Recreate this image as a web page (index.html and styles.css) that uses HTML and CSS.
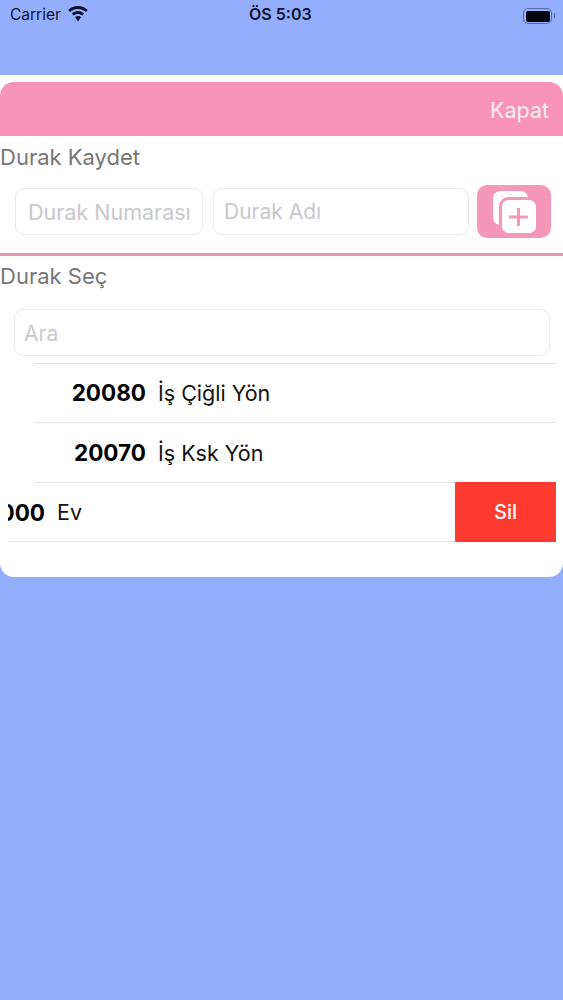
FILE: index.html
```html
<!DOCTYPE html>
<html lang="tr">
<head>
<meta charset="utf-8">
<title>Durak Kaydet</title>
<link rel="stylesheet" href="styles.css">
</head>
<body>
<header class="status">
  <div class="status-left">
    <span class="carrier">Carrier</span>
    <svg class="wifi" viewBox="0 0 20 16" width="20" height="16"><path d="M10 0C6.200 0 2.800 1.500.2 3.900l2 2.200C4.300 4.200 7 3 10 3s5.700 1.200 7.800 3.100l2-2.200C17.200 1.500 13.800 0 10 0z"/><path d="M10 5C7.600 5 5.400 5.900 3.800 7.400l2 2.200C6.900 8.600 8.400 8 10 8s3.100.6 4.200 1.600l2-2.200C14.600 5.900 12.400 5 10 5z"/><path d="M10 10c-1.100 0-2.200.4-3 1.100l3 4.400 3-4.400c-.8-.7-1.900-1.100-3-1.100z"/></svg>
  </div>
  <span class="time">ÖS 5:03</span>
  <div class="battery"><span class="battery-fill"></span></div>
</header>

<main class="panel">
  <div class="sheet">
    <div class="sheet-head"><span class="close">Kapat</span></div>
    <h2 class="title">Durak Kaydet</h2>
    <div class="save-row">
      <input class="field field-num" placeholder="Durak Numarası">
      <input class="field field-name" placeholder="Durak Adı">
      <button class="add" aria-label="Ekle">
        <svg viewBox="0 0 74 53" width="74" height="53">
          <path class="page" d="M24 6h19c5 0 8 3 8 8v18c0 5-3 8-8 8H24c-5 0-8-3-8-8V14c0-5 3-8 8-8z"/>
          <rect class="page page-front" x="23.500" y="13.500" width="37" height="36" rx="8"/>
          <path class="plus" d="M41.500 23v18M32 32h19"/>
        </svg>
      </button>
    </div>
    <div class="rule"></div>
    <h2 class="title title-pick">Durak Seç</h2>
    <div class="search-wrap"><input class="field field-search" placeholder="Ara"></div>
    <div class="list">
      <div class="row row-first"><span class="num">20080</span><span class="name">İş Çiğli Yön</span></div>
      <div class="row row-second"><span class="num">20070</span><span class="name">İş Ksk Yön</span></div>
      <div class="row-swiped">
        <div class="row-main"><span class="num">20000</span><span class="name">Ev</span></div>
        <div class="delete">Sil</div>
      </div>
    </div>
  </div>
</main>
</body>
</html>
```
FILE: styles.css
```css
* { box-sizing: border-box; }
html, body { margin: 0; height: 100%; }
body {
  background: #93aefd;
  font-family: Inter, "Noto Sans", sans-serif;
  overflow: hidden;
}
.status {
  height: 75px;
  padding: 2px 10px 0;
  display: flex;
  justify-content: space-between;
  align-items: flex-start;
  position: relative;
  color: #0b1230;
}
.status-left { display: flex; align-items: center; gap: 7px; height: 24px; }
.carrier { font-size: 15.500px; }
.wifi { fill: #0b1230; }
.time {
  position: absolute;
  left: 249px;
  top: 2px;
  line-height: 24px;
  font-size: 16px;
  font-weight: 600;
}
.battery {
  width: 29px;
  height: 16px;
  margin: 6px 1px 0 0;
  border: 1.500px solid #5a6ca8;
  border-radius: 5px;
  padding: 1.500px;
  position: relative;
}
.battery::after {
  content: "";
  position: absolute;
  right: -4px;
  top: 4px;
  width: 1.500px;
  height: 5px;
  background: #5a6ca8;
}
.battery-fill { display: block; height: 100%; background: #02040e; border-radius: 2px; }

.panel { background: #fff; height: 502px; padding-top: 7px; border-radius: 0 0 14px 14px; }
.sheet-head {
  height: 54px;
  background: #f794b7;
  border-radius: 14px 14px 0 0;
  display: flex;
  align-items: center;
  justify-content: flex-end;
  padding: 1px 14px 0 0;
}
.close { color: #fdeef3; font-size: 21.500px; }
.title {
  margin: 0;
  font-size: 22px;
  font-weight: 400;
  line-height: 26px;
  color: #767676;
}
.sheet > .title { padding-top: 8px; height: 49px; }
.save-row { display: flex; align-items: center; height: 53px; padding-left: 15px; margin-bottom: 15px; }
.field {
  display: block;
  height: 47px;
  background: #fff;
  border: 1px solid #e9e9ec;
  border-radius: 9px;
  padding: 0 12px;
  font: 400 21px Inter, "Noto Sans", sans-serif;
  color: #333;
  outline: none;
}
.field::placeholder { color: #c9c8cd; opacity: 1; }
.field-num { width: 188px; font-size: 21.500px; }
.field-name { width: 256px; margin-left: 10px; padding: 0 10px; }
.add {
  width: 74px;
  height: 53px;
  margin-left: 8px;
  padding: 0;
  border: 0;
  border-radius: 10px;
  background: #f597b8;
}
.add svg { display: block; }
.page { fill: #fff; }
.page-front { stroke: #f597b8; stroke-width: 3; }
.plus { fill: none; stroke: #f597b8; stroke-width: 3; }
.rule { height: 3px; background: #ea93ae; }
.sheet > .title-pick { padding-top: 7px; height: 53px; }
.search-wrap { padding: 0 13px 0 14px; }
.field-search { width: 100%; padding: 2px 9px 0; }
.list { margin: 7px 7px 0 8px; overflow: hidden; }
.row {
  margin-left: 26px;
  height: 59.500px;
  display: flex;
  align-items: center;
  border-bottom: 1px solid #e4e4e6;
  background: #fff;
}
.row-first { border-top: 1px solid #e4e4e6; }
.row-second { height: 60px; padding-top: 1px; }
.num {
  width: 112px;
  flex: none;
  text-align: right;
  font-size: 22.500px;
  font-weight: 700;
  color: #000;
}
.name { margin-left: 12px; font-size: 21.500px; color: #111; }
.row-swiped { margin-left: -75px; height: 59.500px; display: flex; }
.row-main {
  flex: 1;
  display: flex;
  align-items: center;
  padding-top: 1px;
  border-bottom: 1px solid #e4e4e6;
}
.delete {
  width: 101px;
  flex: none;
  margin-top: -1px;
  background: #ff3b30;
  color: #fff;
  font-size: 20px;
  font-weight: 500;
  display: flex;
  align-items: center;
  justify-content: center;
}
```
